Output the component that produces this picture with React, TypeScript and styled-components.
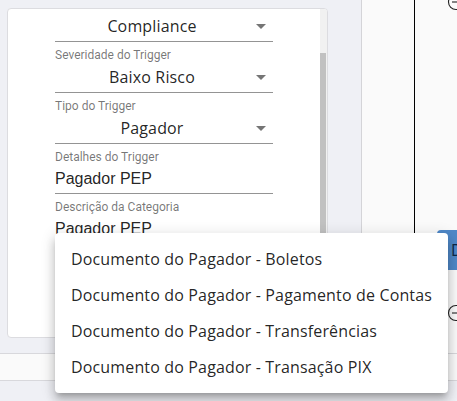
import React from "react";
import styled, { createGlobalStyle } from "styled-components";

const Global = createGlobalStyle`
  html, body { margin: 0; padding: 0; }
  body { background: #eff0f5; font-family: Roboto, "Noto Sans", sans-serif; overflow: hidden; }
`;

const Page = styled.div`
  position: relative;
  width: 457px;
  height: 401px;
  overflow: hidden;
  background: #eff0f5;
  display: flex;
  flex-direction: column;
`;

const Main = styled.div`
  display: flex;
  height: 353px;
  flex: none;
`;

const LeftPanel = styled.div`
  width: 362px;
  flex: none;
  box-sizing: border-box;
  border-right: 1px solid #d4d4d8;
  padding: 8px 0 0 7px;
  background: #eff0f5;
`;

const Card = styled.div`
  width: 321px;
  height: 330px;
  box-sizing: border-box;
  border: 1px solid #dcdce0;
  border-radius: 4px;
  background: #fff;
  display: flex;
  overflow: hidden;
`;

const Viewport = styled.div`
  flex: 1;
  overflow: hidden;
`;

const Content = styled.div<{ $scroll: number }>`
  margin-top: ${(p) => -p.$scroll}px;
  display: flex;
  flex-direction: column;
  align-items: center;
`;

const Track = styled.div`
  width: 7px;
  flex: none;
  background: #f1f1f1;
  display: flex;
  flex-direction: column;
`;

const Thumb = styled.div<{ $top: number; $size: number }>`
  margin-top: ${(p) => p.$top}px;
  height: ${(p) => p.$size}px;
  width: 6px;
  background: #c1c1c1;
`;

const Field = styled.div`
  width: 218px;
  padding-top: 6px;
  display: flex;
  flex-direction: column;
`;

const Label = styled.div<{ $gap?: number }>`
  font-family: Roboto, sans-serif;
  font-size: 12px;
  line-height: 14px;
  height: 14px;
  color: rgba(0, 0, 0, 0.54);
  white-space: nowrap;
  margin-bottom: ${(p) => p.$gap ?? 0}px;
`;

const SelectBox = styled.div`
  height: 30px;
  display: flex;
  align-items: center;
  border-bottom: 1px solid rgba(0, 0, 0, 0.42);
`;

const SelectValue = styled.div`
  flex: 1;
  text-align: center;
  font-family: "Open Sans", sans-serif;
  font-size: 16px;
  letter-spacing: 0.15px;
  color: rgba(0, 0, 0, 0.87);
  white-space: nowrap;
`;

const ArrowIcon = styled.svg`
  width: 24px;
  height: 24px;
  flex: none;
  fill: rgba(0, 0, 0, 0.54);
`;

const TextBox = styled.div`
  height: 29px;
  display: flex;
  align-items: center;
  border-bottom: 1px solid rgba(0, 0, 0, 0.42);
  font-family: "Liberation Sans", Arial, sans-serif;
  font-size: 16px;
  color: rgba(0, 0, 0, 0.87);
  white-space: nowrap;
`;

const RightPanel = styled.div`
  flex: 1;
  position: relative;
  overflow: hidden;
  background: #fafafa;
`;

const Connector = styled.div`
  position: absolute;
  left: 52px;
  top: 0;
  width: 1px;
  height: 300px;
  background: #000;
`;

const Node = styled.div`
  position: absolute;
  left: 75px;
  top: 230px;
  width: 200px;
  height: 40px;
  border-radius: 4px 0 0 0;
  background: #4f88c8;
  color: #0e2746;
  font-family: "Open Sans", sans-serif;
  font-size: 16px;
  line-height: 40px;
  padding-left: 14px;
  box-sizing: border-box;
  white-space: nowrap;
`;

const Toggle = styled.svg<{ $x: number; $y: number }>`
  position: absolute;
  left: ${(p) => p.$x}px;
  top: ${(p) => p.$y}px;
  width: 18px;
  height: 18px;
`;

const BottomBar = styled.div`
  height: 26px;
  flex: none;
  background: #fafafa;
  border-top: 1px solid #d8d8dc;
  border-bottom: 1px solid #d8d8dc;
`;

const Menu = styled.div`
  position: absolute;
  left: 55px;
  top: 233px;
  background: #fff;
  border-radius: 4px;
  padding: 8px 0;
  box-shadow: 0px 5px 5px -3px rgba(0, 0, 0, 0.2),
    0px 8px 10px 1px rgba(0, 0, 0, 0.14), 0px 3px 14px 2px rgba(0, 0, 0, 0.12);
`;

const MenuItem = styled.div`
  padding: 6px 16px;
  font-family: "Open Sans", sans-serif;
  font-size: 16px;
  line-height: 24px;
  letter-spacing: 0.15px;
  color: rgba(0, 0, 0, 0.87);
  white-space: nowrap;
`;

const Arrow = () => (
  <ArrowIcon viewBox="0 0 24 24">
    <path d="M7 10l5 5 5-5z" />
  </ArrowIcon>
);

const CollapseToggle = ({ x, y }: { x: number; y: number }) => (
  <Toggle $x={x} $y={y} viewBox="0 0 18 18">
    <circle cx="9" cy="9" r="7.5" fill="#fafafa" stroke="#222" strokeWidth="1.1" />
    <line x1="5" y1="9" x2="13" y2="9" stroke="#222" strokeWidth="1.1" />
  </Toggle>
);

type FieldDef = {
  kind: "select" | "text";
  label: string;
  value: string;
  gap?: number;
};

const fields: FieldDef[] = [
  { kind: "select", label: "Tipo da Categoria", value: "Compliance", gap: 8 },
  { kind: "select", label: "Severidade do Trigger", value: "Baixo Risco" },
  { kind: "select", label: "Tipo do Trigger", value: "Pagador" },
  { kind: "text", label: "Detalhes do Trigger", value: "Pagador PEP" },
  { kind: "text", label: "Descrição da Categoria", value: "Pagador PEP" },
  { kind: "text", label: "Observações", value: "" },
];

const options = [
  "Documento do Pagador - Boletos",
  "Documento do Pagador - Pagamento de Contas",
  "Documento do Pagador - Transferências",
  "Documento do Pagador - Transação PIX",
];

export default function App() {
  return (
    <Page>
      <Global />
      <Main>
        <LeftPanel>
          <Card>
            <Viewport>
              <Content $scroll={26}>
                {fields.map((f) => (
                  <Field key={f.label}>
                    <Label $gap={f.gap}>{f.label}</Label>
                    {f.kind === "select" ? (
                      <SelectBox>
                        <SelectValue>{f.value}</SelectValue>
                        <Arrow />
                      </SelectBox>
                    ) : (
                      <TextBox>{f.value}</TextBox>
                    )}
                  </Field>
                ))}
              </Content>
            </Viewport>
            <Track>
              <Thumb $top={44} $size={240} />
            </Track>
          </Card>
        </LeftPanel>
        <RightPanel>
          <Connector />
          <Node>Documento</Node>
          <CollapseToggle x={85} y={-7} />
          <CollapseToggle x={85} y={304} />
        </RightPanel>
      </Main>
      <BottomBar />
      <Menu>
        {options.map((o) => (
          <MenuItem key={o}>{o}</MenuItem>
        ))}
      </Menu>
    </Page>
  );
}
